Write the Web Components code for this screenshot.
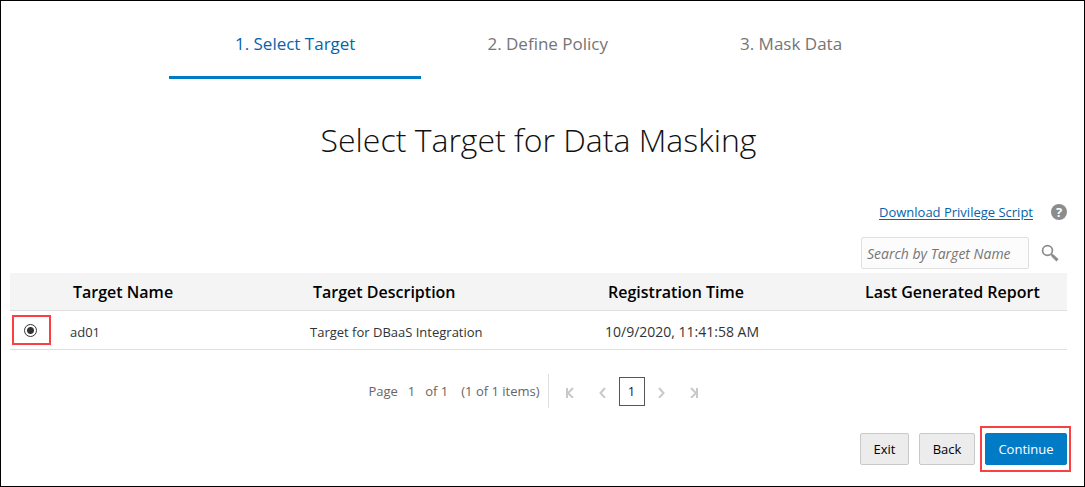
<!DOCTYPE html>
<html lang="en">
<head>
<meta charset="utf-8">
<title>Select Target for Data Masking</title>
<style>
html { height: 100%; }
body {
  margin: 0; min-height: 100%; box-sizing: border-box; display: flex; flex-direction: column;
  border: 1px solid #000; background: #fff; color: #333;
  font-family: "Open Sans", "Noto Sans", sans-serif; font-size: 13px; line-height: 20px;
}
masking-wizard { flex: 1; }
</style>
</head>
<body>
<masking-wizard>
  <wizard-train slot="train"></wizard-train>
  <wizard-toolbar slot="toolbar"></wizard-toolbar>
  <target-table slot="table"></target-table>
  <page-navigator slot="pager"></page-navigator>
  <wizard-actions slot="actions"></wizard-actions>
</masking-wizard>

<script>
function define(name, html) {
  const template = document.createElement('template');
  template.innerHTML = html;
  customElements.define(name, class extends HTMLElement {
    constructor() {
      super();
      this.attachShadow({ mode: 'open' }).append(template.content.cloneNode(true));
    }
  });
}

define('masking-wizard', `
<style>
:host { display: block; padding: 15px 17px 0 9px; }
h1 { margin: 39px 0 40px; font-size: 32px; line-height: 44px; font-weight: 300; text-align: center; color: #111; }
</style>
<slot name="train"></slot>
<h1>Select Target for Data Masking</h1>
<slot name="toolbar"></slot>
<slot name="table"></slot>
<slot name="pager"></slot>
<slot name="actions"></slot>`);

define('train-step', `
<style>
:host { display: block; }
a { display: block; padding: 16px 66px 20px; border-bottom: 3px solid transparent; font-size: 17px; line-height: 24px; color: #757575; text-decoration: none; }
:host([current]) a { color: #0464ac; border-color: #027bc7; }
</style>
<a href="#"><slot></slot></a>`);

define('wizard-train', `
<style>
:host { display: flex; justify-content: center; }
</style>
<train-step current>1. Select Target</train-step>
<train-step>2. Define Policy</train-step>
<train-step>3. Mask Data</train-step>`);

define('wizard-toolbar', `
<style>
:host { display: flex; flex-direction: column; align-items: flex-end; gap: 15px; padding-bottom: 4px; }
.row { display: flex; align-items: center; gap: 18px; }
.search { gap: 12px; padding-right: 8px; }
a { color: #0464ac; text-underline-offset: 2px; }
button { display: block; margin: 0; padding: 0; border: 0; background: none; }
svg { display: block; }
input { box-sizing: border-box; width: 168px; height: 32px; margin: 0; padding: 0 5px; border: 1px solid #dfdfdf; border-radius: 2px; background: #fcfcfc; font: 14px "Open Sans", "Noto Sans", sans-serif; color: #333; outline: none; }
input::placeholder { font-style: italic; color: #757575; opacity: 1; }
.help { display: grid; place-items: center; width: 16px; height: 16px; border-radius: 50%; background: #8a8c8e; color: #fff; font: 700 13px "Open Sans", sans-serif; line-height: 16px; }
</style>
<div class="row"><a href="#">Download Privilege Script</a><button class="help" aria-label="Help">?</button></div>
<div class="row search">
  <input type="text" placeholder="Search by Target Name" aria-label="Search by Target Name">
  <button aria-label="Search"><svg width="18" height="18" viewBox="0 0 18 18" fill="none" stroke="#8a8c8e"><circle cx="6.5" cy="6.5" r="4.9" stroke-width="1.7"/><path d="M10 10l2.500 2.500" stroke-width="2"/><path d="M11.500 11.500l5 4.800" stroke-width="3"/></svg></button>
</div>`);

define('target-table', `
<style>
:host { display: block; }
table { width: 100%; table-layout: fixed; border-collapse: collapse; }
.pick { width: 50px; } .name { width: 240px; } .desc { width: 295px; } .time { width: 257px; } .report { width: 215px; }
th { height: 37px; padding: 0 0 0 13px; background: #f4f4f4; border-bottom: 1px solid #dfdfdf; text-align: left; font-size: 16px; line-height: 20px; font-weight: 600; color: #000; }
td { height: 34px; padding: 4px 0 0 10px; border-bottom: 1px solid #dfdfdf; vertical-align: middle; line-height: 20px; color: #333; }
td:first-child { padding: 4px 2px; vertical-align: top; height: 30px; }
td.stamp { font-size: 14px; }
label { box-sizing: border-box; display: flex; align-items: center; justify-content: center; width: 39px; height: 30px; border: 2px solid #f94144; }
input { appearance: none; box-sizing: border-box; width: 13px; height: 13px; margin: 0 2px 0 0; border: 1px solid #333; border-radius: 50%; background: #fff; }
input:checked { background: radial-gradient(circle at center, #333 0 3px, #fff 4px); }
</style>
<table>
  <colgroup><col class="pick"><col class="name"><col class="desc"><col class="time"><col class="report"></colgroup>
  <thead><tr><th></th><th>Target Name</th><th>Target Description</th><th>Registration Time</th><th>Last Generated Report</th></tr></thead>
  <tbody><tr><td><label><input type="radio" name="target" checked aria-label="ad01"></label></td><td>ad01</td><td>Target for DBaaS Integration</td><td class="stamp">10/9/2020, 11:41:58 AM</td><td></td></tr></tbody>
</table>`);

define('page-navigator', `
<style>
:host { display: flex; justify-content: center; align-items: center; margin-top: 24px; color: #666; }
.info { display: flex; gap: 10px; padding: 7px 8px 7px 0; border-right: 1px solid #dfdfdf; white-space: nowrap; }
.total { margin-right: 3px; }
nav { display: flex; align-items: center; gap: 3px; padding: 0 2px 0 8px; }
button { display: grid; place-items: center; box-sizing: border-box; width: 26px; height: 29px; margin: 0; padding: 0; border: 0; background: none; font: inherit; color: #222; }
.current { border: 1px solid #555; background: #fff; }
svg { display: block; fill: none; stroke: #c9c9c9; stroke-width: 2; }
.first { margin-right: 4px; }
.last { margin-left: 4px; }
</style>
<div class="info"><span>Page</span><span>1</span><span class="total">of 1</span><span>(1 of 1 items)</span></div>
<nav aria-label="Pages">
  <button class="first" aria-label="First page" disabled><svg width="10" height="14" viewBox="0 -2 10 14"><path d="M2 2v10M8 2L3 7l5 5"/></svg></button>
  <button aria-label="Previous page" disabled><svg width="10" height="14" viewBox="0 -2 10 14"><path d="M7 2L2.500 7 7 12"/></svg></button>
  <button class="current" aria-current="page">1</button>
  <button aria-label="Next page" disabled><svg width="10" height="14" viewBox="0 -2 10 14"><path d="M3 2l4.500 5L3 12"/></svg></button>
  <button class="last" aria-label="Last page" disabled><svg width="10" height="14" viewBox="0 -2 10 14"><path d="M8 2v10M2 2l5 5-5 5"/></svg></button>
</nav>`);

define('wizard-actions', `
<style>
:host { display: flex; justify-content: flex-end; align-items: center; gap: 10px; margin: 18px -4px 0 0; }
button { box-sizing: border-box; height: 32px; margin: 0; padding: 0 12px; border: 1px solid #c9c9c9; border-radius: 2px; background: #ececec; font: inherit; color: #000; }
.exit { width: 49px; }
.back { width: 56px; }
.primary { border-color: #027bc7; background: #027bc7; color: #fff; width: 82px; }
.focus { border: 2px solid #f94144; padding: 5px 2px 5px 3px; margin-left: -5px; }
.focus button { display: block; }
</style>
<button class="exit">Exit</button>
<button class="back">Back</button>
<div class="focus"><button class="primary">Continue</button></div>`);
</script>
</body>
</html>
